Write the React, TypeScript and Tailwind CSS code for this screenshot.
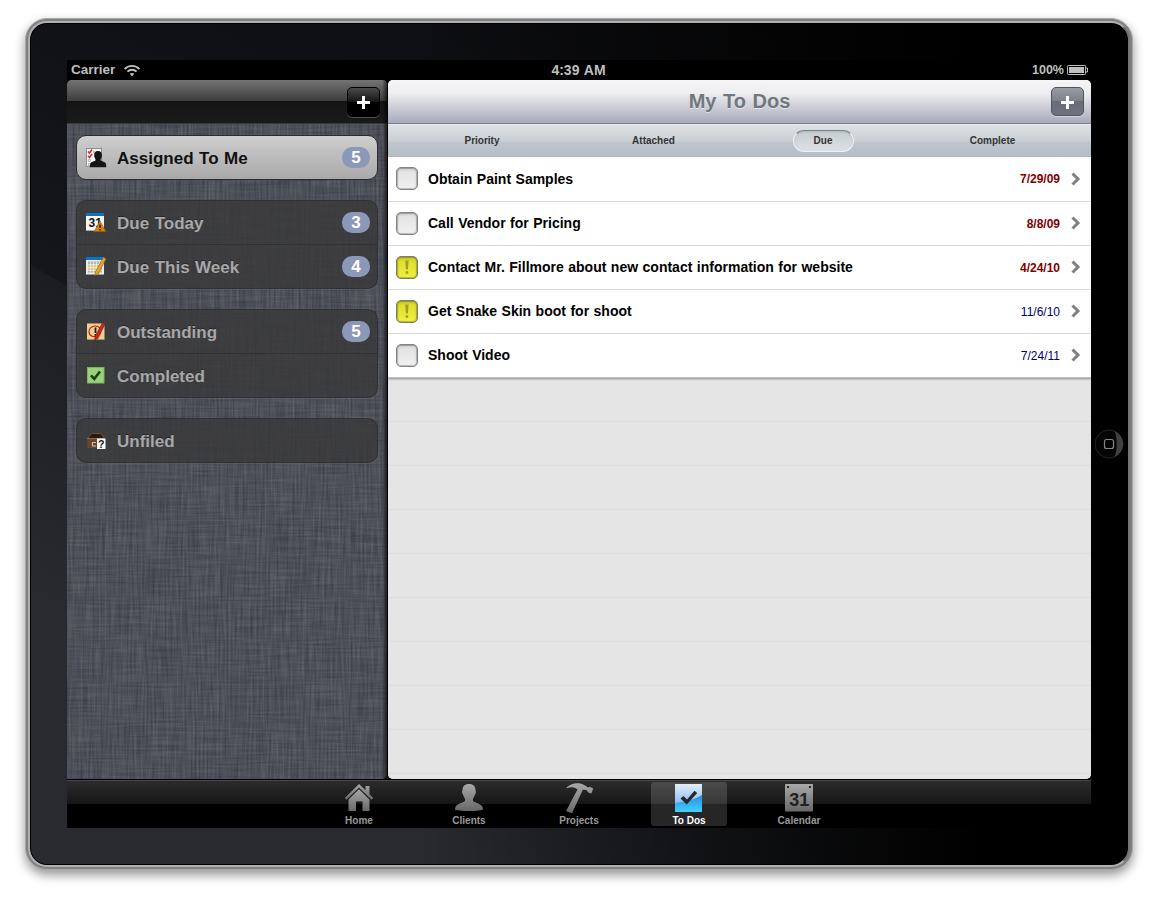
import React from "react";

const Plus = () => (
  <svg width="13" height="13" viewBox="0 0 13 13" className="block">
    <path d="M5 0h3v5h5v3H8v5H5V8H0V5h5z" fill="#fff" />
  </svg>
);

const Wifi = () => (
  <svg width="18" height="13" viewBox="0 0 18 13" className="block" fill="none" stroke="#bfbfbf">
    <path d="M1.6 5.2C5.6 0.8 12.4 0.8 16.4 5.2" strokeWidth="1.9" />
    <path d="M4.4 7.7C7 5 11 5 13.6 7.7" strokeWidth="1.9" />
    <path d="M9 12.2L6.7 9.8C8 8.6 10 8.6 11.3 9.8Z" fill="#bfbfbf" stroke="none" />
  </svg>
);

const Battery = () => (
  <svg width="21" height="10" viewBox="0 0 21 10" className="block">
    <rect x="0.5" y="0.5" width="18" height="9" rx="0.8" fill="none" stroke="#bfbfbf" />
    <rect x="2" y="2" width="15" height="6" fill="#bfbfbf" />
    <path d="M19 3h1.5v4H19" fill="none" stroke="#bfbfbf" />
  </svg>
);

const IconAssigned = () => (
  <svg width="22" height="22" viewBox="0 0 22 22">
    <rect x="1.5" y="1.5" width="15" height="18" fill="#f4f4f4" stroke="#8d8d8d" />
    <path d="M3 4.5l1.5 1.5L7 2.500M3 9l1.500 1.500L7 7" stroke="#d8262c" strokeWidth="1.5" fill="none" />
    <path d="M8 5h6" stroke="#999" strokeWidth="1" strokeDasharray="2 1" />
    <path d="M3.5 12.5h2v2h-2zM3.5 16.500h2v2h-2z" stroke="#aaa" strokeWidth="0.8" fill="none" />
    <path d="M13 4c2.800 0 4 1.800 3.900 4.200 0 1.800-.6 3-1.200 3.900v1.500c1.400 1 5.500 1.300 5.500 4.200V20.300H5V17.800c0-2.900 4-3.200 5.500-4.200v-1.500c-.8-.9-1.300-2.100-1.300-3.900C9.100 5.800 10.200 4 13 4z" fill="#141414" />
  </svg>
);

const IconToday = () => (
  <svg width="22" height="22" viewBox="0 0 22 22">
    <rect x="1" y="2" width="18" height="17" fill="#f5f5f5" />
    <rect x="1" y="1" width="18" height="3" fill="#0a74c4" />
    <path d="M1 18.500h18" stroke="#aaa" />
    <text x="3.500" y="14.500" fontSize="12" fontWeight="700" fontFamily="Liberation Sans, sans-serif" fill="#161616">31</text>
    <path d="M15 9L20.800 19.500H9.200z" fill="#d08313" stroke="#9a5b0a" strokeWidth="0.600" />
    <path d="M15 12.500v3.500M15 17v1.500" stroke="#221400" strokeWidth="1.300" />
  </svg>
);

const IconWeek = () => (
  <svg width="22" height="22" viewBox="0 0 22 22">
    <rect x="1" y="1.500" width="18" height="17" fill="#ececec" />
    <rect x="1" y="1" width="18" height="3" fill="#0a74c4" />
    <path d="M1 18.500h18" stroke="#999" />
    <path d="M3 5.500h14v11H3z" fill="#aeb4b8" />
    <path d="M3 9h14v3H3z" fill="#ecc878" />
    <path d="M3 12h11v3H3z" fill="#dfc890" />
    <path d="M5.500 5.500v11M8.500 5.500v11M11.500 5.500v11M14.500 5.500v11M3 8.500h14M3 11.500h14M3 14.500h14" stroke="#f5f3ea" strokeWidth="0.700" />
    <path d="M18.300 1.500l2.700 1.200L13.300 18l-3.300 1.200.5-3.400z" fill="#e3a52d" stroke="#9b681a" strokeWidth="0.700" />
  </svg>
);

const IconOutstanding = () => (
  <svg width="22" height="22" viewBox="0 0 22 22">
    <rect x="2" y="2.500" width="17.500" height="16" fill="#f1cf91" />
    <path d="M2 18.500h17.500" stroke="#ae8c52" />
    <path d="M15 7C12 3.500 4.500 4.500 4 10.500c0 4.500 4.500 6 8 4.500 4-1.500 5-6 2-8.500" fill="none" stroke="#b7221a" strokeWidth="1.100" />
    <path d="M10.500 6.500v5.500M10.500 13v2" stroke="#241a10" strokeWidth="1.800" />
    <path d="M17.500 2L20 3 12.800 17.500 9.800 19l.2-3.500z" fill="#c72a1c" stroke="#84160e" strokeWidth="0.700" />
  </svg>
);

const IconCompleted = () => (
  <svg width="22" height="22" viewBox="0 0 22 22">
    <rect x="2.500" y="2.500" width="16.500" height="15.500" fill="#9bd07c" stroke="#7fb45f" />
    <path d="M6 10.300l3.300 3.600L15 6.500" fill="none" stroke="#17490c" strokeWidth="2.600" />
  </svg>
);

const IconUnfiled = () => (
  <svg width="22" height="22" viewBox="0 0 22 22">
    <path d="M6.500 3.500h9.500l3.500 5H2.500z" fill="#2a1b11" stroke="#765033" />
    <path d="M2 8.500h17.500v9.500H2.500z" fill="#66452d" />
    <path d="M2 8.500h17.500" stroke="#93694a" />
    <path d="M11 12.500H7.500v3.500H11" fill="none" stroke="#c3c0bc" strokeWidth="1.200" />
    <rect x="12" y="8.500" width="8.500" height="10.500" fill="#fafafa" />
    <text x="13.100" y="17.500" fontSize="10.500" fontWeight="700" fontFamily="Liberation Sans, sans-serif" fill="#111">?</text>
  </svg>
);

type SideItem = { label: string; icon: React.ReactNode; count?: number };

const Badge = ({ n }: { n: number }) => (
  <span className="mr-[7px] mb-px flex h-[21px] w-[28px] items-center justify-center rounded-[10px] bg-[#8b98b8] text-[17px] leading-none text-white">
    {n}
  </span>
);

const SideGroup = ({ items }: { items: SideItem[] }) => (
  <div className="relative rounded-[10px] border border-[#2e2e31]/80 bg-[#38383a]/80 shadow-[0_1px_0_rgba(255,255,255,0.06)]">
    {items.map((it, i) => (
      <div
        key={it.label}
        className={
          "flex h-[43px] items-center pl-[8px] text-[17px] font-bold text-[#a8a8a8] [word-spacing:0.8px] " +
          (i > 0 ? "box-content border-t border-[#2e2e31]/80" : "")
        }
      >
        {it.icon}
        <span className="ml-[10px] flex-1 pt-px leading-none [text-shadow:0_-1px_0_rgba(0,0,0,0.35)]">{it.label}</span>
        {it.count !== undefined && <Badge n={it.count} />}
      </div>
    ))}
  </div>
);

const todos = [
  { title: "Obtain Paint Samples", date: "7/29/09", late: true, flag: false },
  { title: "Call Vendor for Pricing", date: "8/8/09", late: true, flag: false },
  { title: "Contact Mr. Fillmore about new contact information for website", date: "4/24/10", late: true, flag: true },
  { title: "Get Snake Skin boot for shoot", date: "11/6/10", late: false, flag: true },
  { title: "Shoot Video", date: "7/24/11", late: false, flag: false },
];

const Check = ({ flag }: { flag: boolean }) =>
  flag ? (
    <span className="mb-px flex h-[23px] w-[22px] items-center justify-center rounded-[5px] border border-[#7e7e66] bg-linear-to-b from-[#dada2e] to-[#f2f040] shadow-[inset_0_0_0_1px_rgba(110,110,40,0.35),inset_0_1px_3px_rgba(110,110,0,0.5)]">
      <svg width="6" height="15" viewBox="0 0 6 15">
        <path d="M1.200 0.500h3.400l-.7 9h-2zM1.600 11.300h2.600v2.500H1.600z" fill="#a0a01c" />
      </svg>
    </span>
  ) : (
    <span className="mb-px h-[23px] w-[22px] rounded-[5px] border border-[#848484] bg-linear-to-b from-[#e2e2e2] to-[#f0f0f0] shadow-[inset_0_0_0_1px_rgba(0,0,0,0.18),inset_0_1px_3px_rgba(0,0,0,0.2)]" />
  );

const Linen = () => (
  <svg className="absolute inset-0 block h-full w-full" width="320" height="699">
    <filter id="weft" x="0" y="0" width="100%" height="100%" colorInterpolationFilters="sRGB">
      <feTurbulence type="fractalNoise" baseFrequency="0.025 0.5" numOctaves="2" seed="4" />
      <feColorMatrix values="0.5 0 0 0 0.055  0.5 0 0 0 0.065  0.44 0 0.06 0 0.1  0 0 0 0 0.32" />
    </filter>
    <filter id="warp" x="0" y="0" width="100%" height="100%" colorInterpolationFilters="sRGB">
      <feTurbulence type="fractalNoise" baseFrequency="0.5 0.025" numOctaves="2" seed="9" />
      <feColorMatrix values="0.5 0 0 0 0.055  0.5 0 0 0 0.065  0.44 0 0.06 0 0.1  0 0 0 0 0.32" />
    </filter>
    <rect width="320" height="699" filter="url(#weft)" />
    <rect width="320" height="699" filter="url(#warp)" />
  </svg>
);

const GrayFade = ({ id }: { id: string }) => (
  <linearGradient id={id} x1="0" y1="0" x2="0" y2="1">
    <stop offset="0" stopColor="#a8a8a8" />
    <stop offset="1" stopColor="#686868" />
  </linearGradient>
);

const HomeIcon = () => (
  <svg width="30" height="30" viewBox="0 0 30 30">
    <GrayFade id="g1" />
    <path d="M15 1L0.800 15l1.700 1.700L15 4.500l12.500 12.200 1.700-1.700L25.500 11.300V3H21.500v4.300z" fill="url(#g1)" />
    <path d="M15 6.300L4.500 16.500V28H12V18.500h6.500V28H25.500V16.500z" fill="url(#g1)" />
  </svg>
);
const ClientIcon = () => (
  <svg width="30" height="30" viewBox="0 0 30 30">
    <GrayFade id="g2" />
    <path d="M15 1c4.500 0 6.500 2.600 6.500 6 0 .8.600 1 .4 2.500-.2 1.600-.8 1.700-1.100 2.500-.5 1.800-1.200 3-1.800 3.800v2.200c2 2 10 2.500 10 8.200 0 2.400-28 2.400-28 0C1 20.500 9 20 11 18v-2.200c-.6-.8-1.300-2-1.800-3.800-.3-.8-.9-.9-1.100-2.500C7.900 8 8.500 7.800 8.500 7c0-3.400 2-6 6.500-6z" fill="url(#g2)" />
  </svg>
);
const HammerIcon = () => (
  <svg width="30" height="30" viewBox="0 0 30 30">
    <GrayFade id="g3" />
    <path d="M2.500 4.500C7 .5 11-.2 15 .300c3 .2 6.500 2.200 9 4.200l1.800-.7 3.400 1.700-1.800 5-3.200-.9-1.700-2.600-3.700-.2L8 30.300 2 28 13.500 6.500C10 3.500 6.500 3.800 3 5.200z" fill="url(#g3)" />
  </svg>
);
const TodoIcon = () => (
  <svg width="30" height="30" viewBox="0 0 30 30">
    <linearGradient id="b1" x1="0" y1="0" x2="0" y2="1">
      <stop offset="0" stopColor="#e3edf8" />
      <stop offset="1" stopColor="#64a8ee" />
    </linearGradient>
    <linearGradient id="b2" x1="0" y1="0" x2="0" y2="1">
      <stop offset="0" stopColor="#268be4" />
      <stop offset="1" stopColor="#42d0fb" />
    </linearGradient>
    <rect x="1" y="1" width="27" height="28" fill="url(#b1)" />
    <path d="M1 20C10 19 20 17 28 12V29H1z" fill="url(#b2)" />
    <path d="M6.500 15.500l3-2.600 3.500 3.600 7.500-8.700 2.700 2.200L12.700 21.500z" fill="#282828" />
  </svg>
);
const CalendarIcon = () => (
  <svg width="30" height="30" viewBox="0 0 30 30">
    <GrayFade id="g5" />
    <rect x="1" y="1" width="28" height="27.500" rx="1" fill="url(#g5)" />
    <path d="M3 3h2v2H3zM25 3h2v2h-2z" fill="#222" />
    <text x="15.200" y="23" textAnchor="middle" fontSize="18" fontWeight="700" fontFamily="Liberation Sans, sans-serif" fill="#222">31</text>
  </svg>
);

const tabs = [
  { label: "Home", icon: <HomeIcon /> },
  { label: "Clients", icon: <ClientIcon /> },
  { label: "Projects", icon: <HammerIcon /> },
  { label: "To Dos", icon: <TodoIcon />, on: true },
  { label: "Calendar", icon: <CalendarIcon /> },
];

export default function App() {
  return (
    <div className="h-[904px] w-[1159px] overflow-hidden bg-white pt-[18px] pl-[25px] font-['Liberation_Sans',Arial,sans-serif]">
      <div className="h-[852px] w-[1108px] rounded-[22px] border border-[#a9a9a9] bg-[#808080] p-[2px] shadow-[0_5px_11px_rgba(0,0,0,0.42)]">
        <div className="h-full rounded-[19px] border-2 border-[#b0b0b0] border-r-[#757575] bg-black p-px">
          <div className="h-full rounded-[16px] bg-[linear-gradient(90deg,transparent_0%,transparent_35%,#000_87%),linear-gradient(210deg,#08080a_0%,#14161a_59.3%,#1b1d21_59.4%,#282a30_82%)]">
            <div className="relative flex h-full pt-[36px] pl-[36px]">
              <div className="flex h-[768px] w-[1024px] flex-col bg-black">
                <div className="grid h-[20px] grid-cols-3 items-center text-[14px] font-bold leading-none text-[#bfbfbf]">
                  <div className="flex items-center gap-[8px] pl-[4px]">
                    <span className="pb-px text-[13.5px]">Carrier</span>
                    <Wifi />
                  </div>
                  <div className="pr-px pb-px text-center [word-spacing:1px]">4:39 AM</div>
                  <div className="flex items-center justify-end gap-[3px] pr-[3px] text-[12.5px]">
                    <span>100%</span>
                    <span className="pb-px">
                      <Battery />
                    </span>
                  </div>
                </div>

                <div className="flex h-[699px] gap-px">
                  <aside className="relative flex w-[320px] flex-col overflow-hidden rounded-t-[5px] rounded-br-[5px] bg-[#4e5059]">
                    <Linen />
                    <header className="relative flex h-[44px] shrink-0 items-center justify-end border-b border-black/50 bg-[linear-gradient(#747474_0,#3b3b3b_50%,#141415_50%,#1a1a1b_100%)] pr-[7px]">
                      <button className="flex h-[30px] w-[33px] items-center justify-center rounded-[5px] border border-black bg-[linear-gradient(#4a4a4a_0,#151515_50%,#000_50%)] pt-px shadow-[0_1px_0_rgba(255,255,255,0.25)]">
                        <Plus />
                      </button>
                    </header>
                    <nav className="flex flex-col gap-[20px] px-[9px] pt-[11px]">
                      <div className="relative flex h-[45px] items-center rounded-[10px] border border-[#2c2c2f] bg-linear-to-b from-[#cfcfcf] to-[#a9a9a9] pl-[8px] text-[17px] font-bold text-[#111] [word-spacing:0.8px]">
                        <IconAssigned />
                        <span className="ml-[10px] flex-1 pt-px leading-none">Assigned To Me</span>
                        <Badge n={5} />
                      </div>
                      <SideGroup
                        items={[
                          { label: "Due Today", icon: <IconToday />, count: 3 },
                          { label: "Due This Week", icon: <IconWeek />, count: 4 },
                        ]}
                      />
                      <SideGroup
                        items={[
                          { label: "Outstanding", icon: <IconOutstanding />, count: 5 },
                          { label: "Completed", icon: <IconCompleted /> },
                        ]}
                      />
                      <SideGroup items={[{ label: "Unfiled", icon: <IconUnfiled /> }]} />
                    </nav>
                    <div className="absolute inset-y-0 right-0 w-[5px] bg-linear-to-r from-transparent to-black/60" />
                  </aside>

                  <main className="flex w-[703px] flex-col overflow-hidden rounded-[5px] bg-[#e5e5e5]">
                    <header className="grid h-[44px] shrink-0 grid-cols-[40px_1fr_40px] items-center border-b border-[#7b8096] bg-[linear-gradient(#f6f6f8_0,#eeeef1_30%,#a8aaba_100%)]">
                      <span />
                      <h1 className="pb-[2px] text-center text-[20px] font-bold leading-none text-[#70787f] [text-shadow:0_1px_0_rgba(255,255,255,0.5)] [word-spacing:1px]">My To Dos</h1>
                      <button className="flex h-[29px] w-[33px] items-center justify-center rounded-[5px] border border-[#4f545d] bg-[linear-gradient(#9a9ca4_0,#7c7f89_50%,#686c78_50%,#6e737e_100%)] pt-px shadow-[0_1px_0_rgba(255,255,255,0.4)]">
                        <Plus />
                      </button>
                    </header>
                    <div className="grid h-[33px] shrink-0 grid-cols-[188px_155px_184px_155px] items-center border-t border-t-[#e4e8ea] bg-[linear-gradient(#dde1e4_0,#c9d0d5_50%,#bdc6cc_55%,#b3bdc4_100%)] text-center text-[10px] font-bold leading-none text-[#333]">
                      <span>Priority</span>
                      <span>Attached</span>
                      <span className="mx-auto mb-px flex h-[22px] w-[61px] items-center justify-center rounded-full border border-[#edf0f2] border-t-[#7d858b] bg-linear-to-b from-[#c6ced2] to-[#dbe0e3] pt-px shadow-[inset_0_1px_2px_rgba(0,0,0,0.12)]">
                        Due
                      </span>
                      <span>Complete</span>
                    </div>
                    <ul className="relative shrink-0 bg-white shadow-[0_1px_2px_rgba(0,0,0,0.4)]">
                      {todos.map((t, i) => (
                        <li
                          key={t.title}
                          className={
                            "flex items-center border-b border-[#d9d9d9] pr-[10px] pl-[8px] last:border-[#c4c4c4] " +
                            (i === 0 ? "h-[45px]" : "h-[44px]")
                          }
                        >
                          <Check flag={t.flag} />
                          <span className="ml-[10px] flex-1 pb-px text-[14px] font-bold leading-none text-black [word-spacing:0.6px]">{t.title}</span>
                          <span className={"mr-[11px] text-[12px] leading-none " + (t.late ? "font-bold text-[#800000]" : "text-[#000070]")}>
                            {t.date}
                          </span>
                          <svg width="10" height="14" viewBox="0 0 10 14" className="mb-px">
                            <path d="M1.500 1.500L7 7l-5.500 5.500" fill="none" stroke="#808080" strokeWidth="3" />
                          </svg>
                        </li>
                      ))}
                    </ul>
                    <div className="grow bg-[repeating-linear-gradient(#e5e5e5_0,#e5e5e5_43px,#dcdcdc_43px,#dcdcdc_44px)]" />
                  </main>
                </div>

                <footer className="flex h-[49px] items-start justify-center gap-[34px] border-t border-black bg-[linear-gradient(#484848_0,#484848_1px,#2c2c2c_1px,#161616_24px,#000_24px)] pt-[2px]">
                  {tabs.map((t) => (
                    <div
                      key={t.label}
                      className={
                        "flex h-[44px] w-[76px] flex-col items-center rounded-[3px] text-[10px] font-bold leading-none " +
                        (t.on ? "bg-white/15 text-white" : "text-[#999]")
                      }
                    >
                      <div className="h-[34px] pt-px">{t.icon}</div>
                      <span>{t.label}</span>
                    </div>
                  ))}
                </footer>
              </div>
              <div className="flex w-[36px] items-center justify-center pb-[37px]">
                <svg width="30" height="30" viewBox="0 0 30 30">
                  <circle cx="15" cy="15" r="14" fill="#050505" stroke="#242424" />
                  <path d="M20.500 2A14 14 0 0 1 20.500 28C23.500 20 23.500 10 20.500 2z" fill="#404040" />
                  <rect x="10.500" y="10.500" width="9" height="9" rx="2" fill="none" stroke="#858585" strokeWidth="1.200" />
                </svg>
              </div>
            </div>
          </div>
        </div>
      </div>
    </div>
  );
}
